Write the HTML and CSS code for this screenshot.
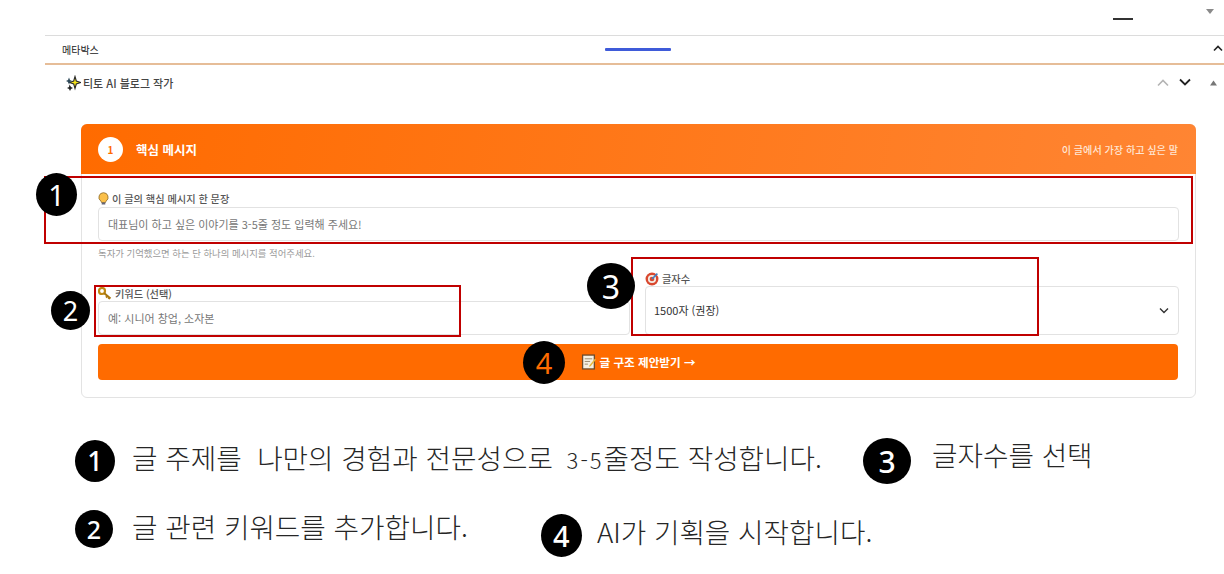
FILE: index.html
```html
<!DOCTYPE html>
<html lang="ko">
<head>
  <meta charset="UTF-8">
  <title>티토 AI 블로그 작가</title>
  <link rel="stylesheet" href="styles.css">
</head>
<body>
  <div class="topbar">
    <span class="dash"></span>
    <svg class="tri-down" width="10" height="7" viewBox="0 0 10 7"><path d="M1 1h8L5 6z" fill="#8a8a8a"/></svg>
  </div>

  <div class="metabox">
    <span class="metabox-title">메타박스</span>
    <span class="drag-bar"></span>
    <svg class="meta-caret" width="10" height="7" viewBox="0 0 10 7"><path d="M1 5.500 5 1.500l4 4" fill="none" stroke="#222" stroke-width="1.600"/></svg>
  </div>

  <div class="plugin-head">
    <svg class="sparkle" width="16" height="16" viewBox="0 0 16 16">
      <path d="M10 1.500 11.300 6 15.500 7.500 11.300 9 10 13.500 8.700 9 4.500 7.500 8.700 6z" fill="#f7e51a" stroke="#2a2a2a" stroke-width="1.100"/>
      <path d="M4 2.500 5 5 7 6 5 7 4 9.500 3 7 1 6 3 5z" fill="#2f4a5a"/>
      <path d="M4.500 9.500 6 12 8 13 6 14 5 16 4 14 2 13 4 12z" fill="#222"/>
    </svg>
    <span class="plugin-title">티토 AI 블로그 작가</span>
    <div class="plugin-controls">
      <svg width="14" height="9" viewBox="0 0 14 9"><path d="M2 7.500 7 2.500l5 5" fill="none" stroke="#b4b4b4" stroke-width="1.600"/></svg>
      <svg width="14" height="9" viewBox="0 0 14 9"><path d="M2 1.500l5 5 5-5" fill="none" stroke="#222" stroke-width="1.800"/></svg>
      <svg class="tri-up" width="9" height="6" viewBox="0 0 9 6"><path d="M4.500 .5 8 5.500H1z" fill="#777"/></svg>
    </div>
  </div>

  <div class="card">
    <div class="card-head">
      <span class="step-no">1</span>
      <h2 class="card-title">핵심 메시지</h2>
      <span class="card-note">이 글에서 가장 하고 싶은 말</span>
    </div>
    <div class="card-body">
      <label class="field-label">
        <svg width="11" height="13" viewBox="0 0 11 13"><path d="M5.500 .7a4.600 4.600 0 0 1 2.600 8.400L7.500 10.500h-4L2.900 9.100A4.600 4.600 0 0 1 5.500 .7z" fill="#fbc04a" stroke="#8a6a2a" stroke-width=".8"/><rect x="3.700" y="10.500" width="3.600" height="2" fill="#667"/></svg>
        이 글의 핵심 메시지 한 문장
      </label>
      <div class="input message-input">대표님이 하고 싶은 이야기를 3-5줄 정도 입력해 주세요!</div>
      <p class="hint">독자가 기억했으면 하는 단 하나의 메시지를 적어주세요.</p>

      <div class="field-row">
        <div>
          <label class="field-label">
            <svg width="14" height="13" viewBox="0 0 14 13"><circle cx="4" cy="4" r="3" fill="none" stroke="#c08a14" stroke-width="2.200"/><path d="M6 6l6.500 5.500M9.500 9 8 10.500M11.500 10.500 10.500 12" fill="none" stroke="#a8760e" stroke-width="2"/></svg>
            키워드 (선택)
          </label>
          <div class="input">예: 시니어 창업, 소자본</div>
        </div>
        <div>
          <label class="field-label">
            <svg width="14" height="14" viewBox="0 0 13 13"><circle cx="6.500" cy="6.500" r="6" fill="#d9482f"/><circle cx="6.500" cy="6.500" r="3.800" fill="#f3ece4"/><circle cx="6.500" cy="6.500" r="2.200" fill="#d9482f"/><path d="M6.500 6.500 11.500 1.500" stroke="#3f7fc4" stroke-width="1.500"/></svg>
            글자수
          </label>
          <div class="select">
            <span class="select-value">1500자 (권장)</span>
            <svg width="10" height="7" viewBox="0 0 10 7"><path d="M1 1.500l4 4 4-4" fill="none" stroke="#333" stroke-width="1.400"/></svg>
          </div>
        </div>
      </div>

      <button class="submit">
        <svg width="16" height="16" viewBox="0 0 15 15"><rect x="1.500" y="1" width="11" height="13" fill="#f6f0e2" stroke="#6b4a2b" stroke-width="1.200"/><path d="M3.500 4.500h7M3.500 7h5M3.500 9.500h3" stroke="#9a8a70" stroke-width=".9"/><path d="M8 10.500l5-6 1 1-5 6-1.500.5z" fill="#e8b93a"/></svg>
        글 구조 제안받기 →
      </button>
    </div>
  </div>

  <div class="legend">
    <div class="legend-row first">
      <div class="legend-item item-1">
        <span class="num num-1">1</span>
        <span class="legend-text">글 주제를&nbsp; 나만의 경험과 전문성으로 <small>3-5</small>줄정도 작성합니다.</span>
      </div>
      <div class="legend-item item-3">
        <span class="num num-3">3</span>
        <span class="legend-text">글자수를 선택</span>
      </div>
    </div>
    <div class="legend-row second">
      <div class="legend-item item-2">
        <span class="num num-2">2</span>
        <span class="legend-text">글 관련 키워드를 추가합니다.</span>
      </div>
      <div class="legend-item item-4">
        <span class="num num-4">4</span>
        <span class="legend-text">AI가 기획을 시작합니다.</span>
      </div>
    </div>
  </div>

  <!-- screenshot annotations on top of the form -->
  <span class="mark box-1"></span>
  <span class="mark box-2"></span>
  <span class="mark box-3"></span>
  <span class="badge badge-1">1</span>
  <span class="badge badge-2">2</span>
  <span class="badge badge-3">3</span>
  <span class="badge badge-4">4</span>
</body>
</html>
```

FILE: styles.css
```css
* { box-sizing: border-box; }
html, body { height: 100%; }
body {
  margin: 0;
  position: relative;
  overflow: hidden;
  background: #fff;
  color: #333;
  font-family: "Noto Sans CJK KR", "Noto Sans", sans-serif;
}

.topbar {
  height: 35px;
  position: relative;
}
.dash {
  position: absolute;
  left: 1113px;
  top: 18px;
  width: 20px;
  height: 2px;
  background: #333;
}
.tri-down {
  position: absolute;
  left: 1205px;
  top: 8px;
}

.metabox {
  margin-left: 45px;
  height: 30px;
  border-top: 1px solid #dcdcdc;
  border-bottom: 2px solid #e6bd98;
  display: flex;
  align-items: center;
  padding-left: 17px;
  position: relative;
}
.metabox-title {
  font-size: 10px;
  color: #222;
}
.drag-bar {
  position: absolute;
  left: 560px;
  top: 12px;
  width: 66px;
  height: 2.500px;
  background: #3f5bd9;
  border-radius: 1px;
}
.meta-caret {
  position: absolute;
  right: 1px;
  top: 9px;
}

.plugin-head {
  height: 37px;
  margin-left: 65px;
  display: flex;
  align-items: center;
  gap: 2px;
  padding-bottom: 2px;
}
.plugin-title {
  font-size: 11px;
  font-weight: 500;
  color: #444;
}
.plugin-controls {
  margin-left: auto;
  display: flex;
  align-items: center;
  gap: 8px;
  padding-right: 6px;
}
.tri-up { margin-left: 9px; }

.card {
  margin: 22px 28px 0 81px;
  height: 274px;
  border: 1px solid #e3e3e3;
  border-radius: 6px;
}
.card-head {
  height: 50px;
  margin: -1px -1px 0;
  padding: 0 18px 0 17px;
  display: flex;
  align-items: center;
  background: linear-gradient(100deg, #ff6b00, #ff8533);
  border-radius: 6px 6px 0 0;
  color: #fff;
}
.step-no {
  width: 25px;
  height: 25px;
  border-radius: 50%;
  background: #fff;
  color: #ff6b00;
  font-size: 10px;
  font-weight: 700;
  display: flex;
  align-items: center;
  justify-content: center;
}
.card-title {
  margin: 0 0 0 13px;
  font-size: 12.500px;
  font-weight: 700;
}
.card-note {
  margin-left: auto;
  font-size: 10.100px;
  font-weight: 500;
  color: #ffe6d4;
}

.card-body { padding: 17px 16px 0; }
.field-label {
  display: flex;
  align-items: center;
  gap: 3px;
  height: 15px;
  font-size: 10.200px;
  font-weight: 500;
  color: #555;
}
.input {
  height: 34px;
  padding: 0 9px;
  display: flex;
  align-items: center;
  border: 1px solid #e2e2e2;
  border-radius: 4px;
  font-size: 11px;
  color: #777;
}
.message-input { margin-top: 1px; }
.hint {
  margin: 6px 0 0;
  height: 12px;
  line-height: 12px;
  font-size: 9.400px;
  color: #9a9a9a;
}
.field-row {
  margin-top: 12px;
  display: grid;
  grid-template-columns: 532px 534px;
  column-gap: 15px;
  align-items: end;
}
.select {
  height: 49px;
  padding: 0 9px 0 8px;
  display: flex;
  align-items: center;
  justify-content: space-between;
  border: 1px solid #e2e2e2;
  border-radius: 4px;
  font-size: 11px;
  color: #333;
}
.select-value { margin-bottom: 2px; }
.submit {
  width: 1080px;
  height: 36px;
  margin-top: 9px;
  display: flex;
  align-items: center;
  justify-content: center;
  gap: 3px;
  border: none;
  border-radius: 4px;
  background: #ff6b00;
  color: #fff;
  font-family: inherit;
  font-size: 11.600px;
  font-weight: 700;
}

.legend { margin-top: 39px; }
.legend-row { display: flex; }
.legend-row.second { margin-top: 26px; }
.legend-item {
  display: flex;
  align-items: center;
}
.item-1 { margin-left: 75px; }
.item-1 .legend-text { margin-bottom: 6px; }
.item-3 { margin-left: 41px; align-items: flex-start; }
.item-3 .num { margin-top: 1px; }
.item-3 .legend-text { margin-top: -2px; }
.item-2 { margin-left: 75px; align-items: flex-start; }
.item-2 .legend-text { margin-top: -3px; }
.item-4 { margin-left: 73px; margin-top: 2px; }
.item-4 .legend-text { margin-bottom: 8px; }
.legend-text {
  font-size: 27.700px;
  font-weight: 300;
  line-height: 38px;
  color: #262626;
  white-space: nowrap;
}
.legend-text small {
  margin-left: 6px;
  font-size: 22px;
  letter-spacing: 2px;
}
.num {
  flex: none;
  border-radius: 50%;
  background: #000;
  color: #fff;
  display: flex;
  align-items: center;
  justify-content: center;
  font-family: "Noto Sans", sans-serif;
  font-weight: 500;
}
.num-1 { width: 40px; height: 42px; font-size: 27px; margin-right: 17px; }
.num-2 { width: 38px; height: 38px; font-size: 25px; margin-right: 19px; }
.num-3 { width: 48px; height: 46px; font-size: 30px; margin-right: 21px; }
.num-4 { width: 41px; height: 43px; font-size: 29px; margin-right: 15px; }

.mark {
  position: absolute;
  border: 2px solid #c00000;
}
.box-1 { left: 44px; top: 176px; width: 1149px; height: 68px; }
.box-2 { left: 94px; top: 285px; width: 367px; height: 52px; }
.box-3 { left: 631px; top: 257px; width: 408px; height: 79px; }

.badge {
  position: absolute;
  border-radius: 50%;
  background: #000;
  color: #fff;
  display: flex;
  align-items: center;
  justify-content: center;
  font-family: "Noto Sans", sans-serif;
}
.badge-1 { left: 36px; top: 173px; width: 41px; height: 43px; font-size: 29px; }
.badge-2 { left: 51px; top: 291px; width: 39px; height: 39px; font-size: 27px; }
.badge-3 { left: 587px; top: 263px; width: 48px; height: 46px; font-size: 32px; }
.badge-4 { left: 523px; top: 341px; width: 42px; height: 43px; font-size: 29px; color: #ff6b00; }
```
